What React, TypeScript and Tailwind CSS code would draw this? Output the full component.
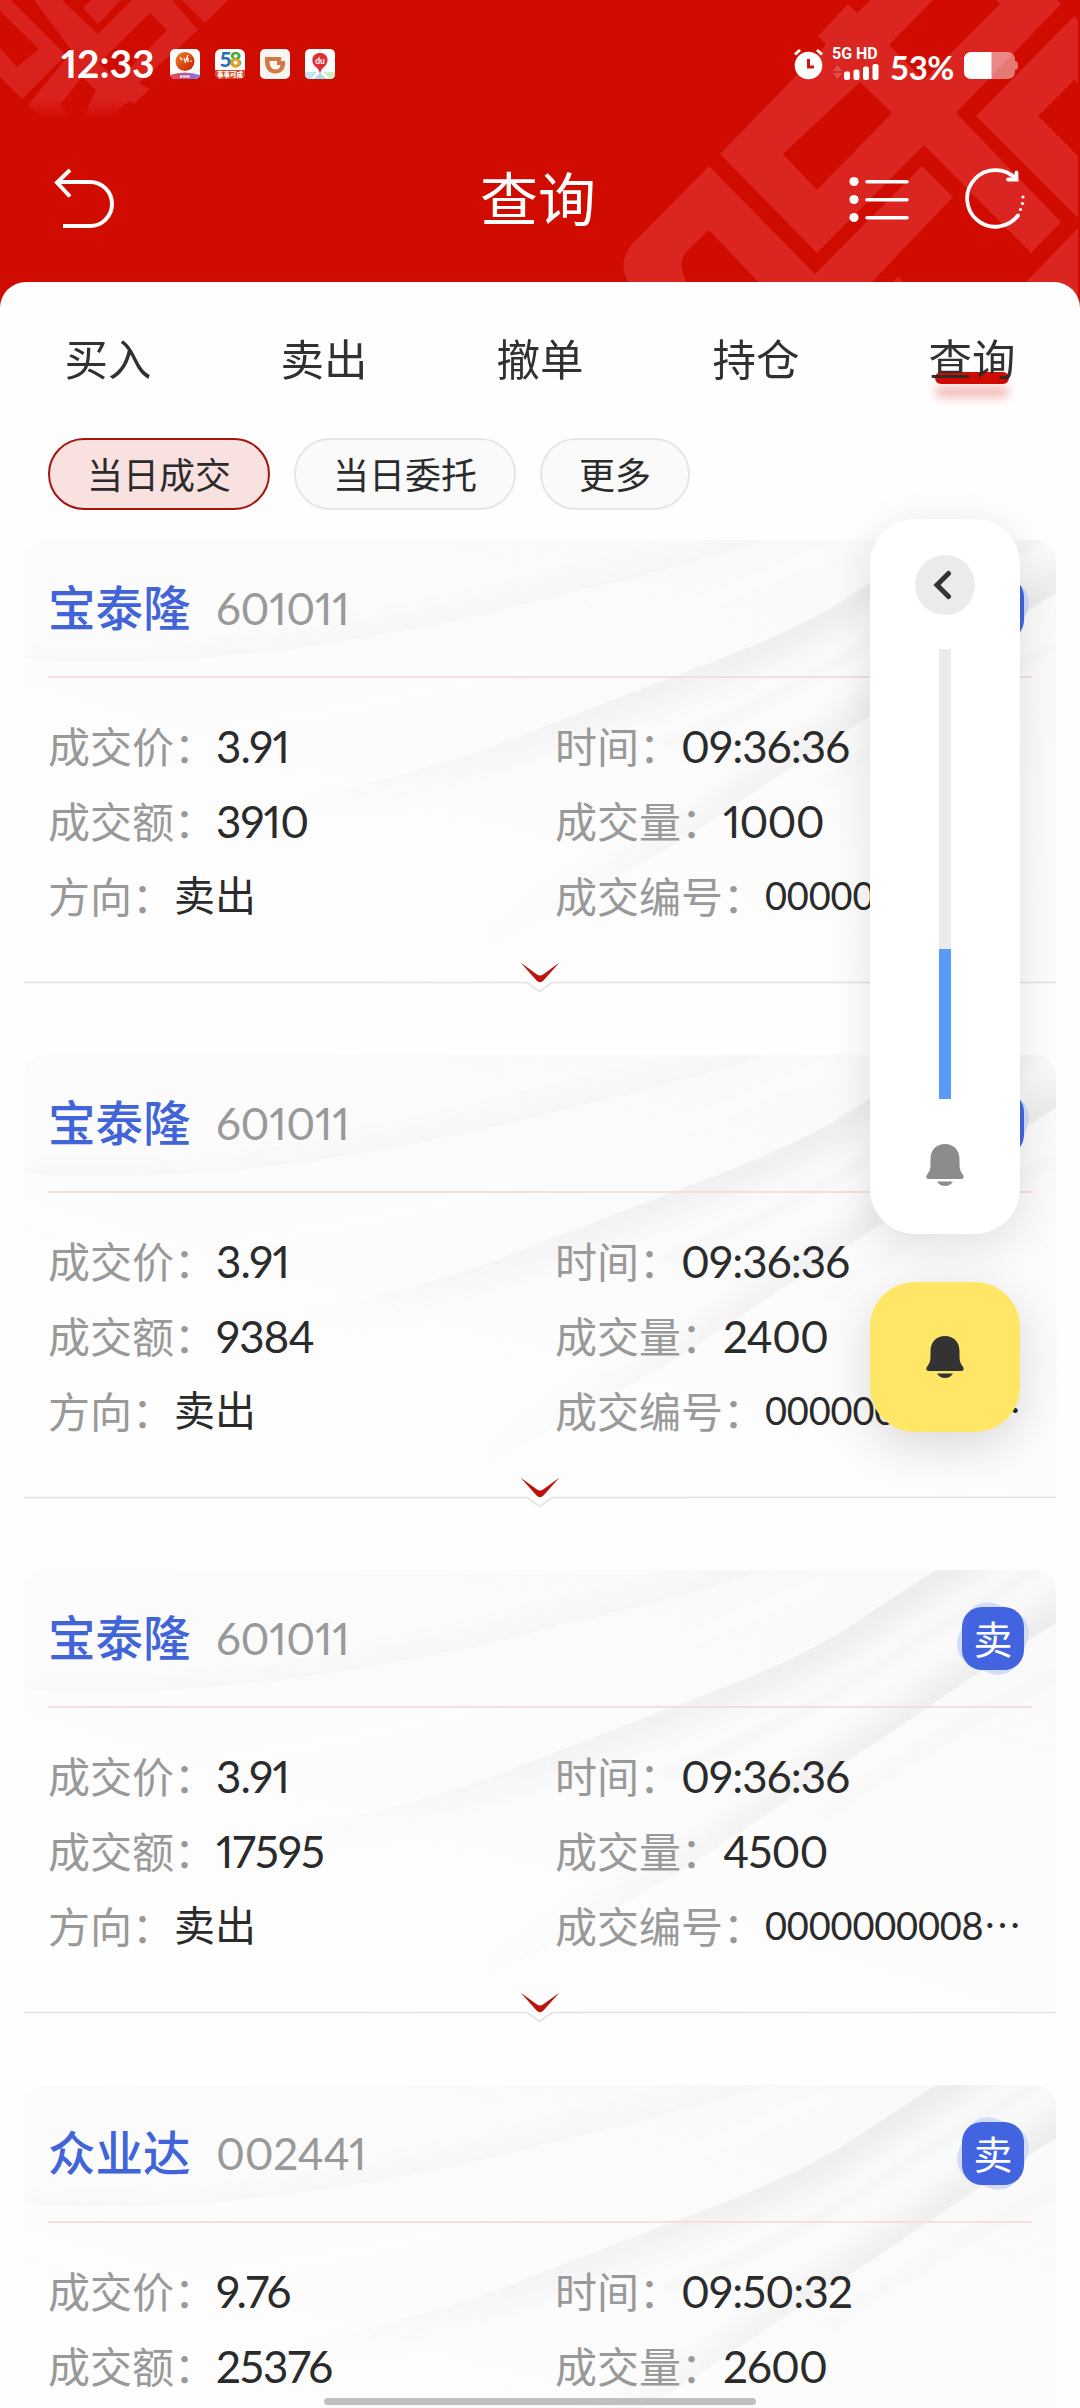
const tabs = ["买入", "卖出", "撤单", "持仓", "查询"];

const filters = ["当日成交", "当日委托", "更多"];

const deals = [
  { name: "宝泰隆", code: "601011", price: "3.91", time: "09:36:36", amount: "3910", volume: "1000" },
  { name: "宝泰隆", code: "601011", price: "3.91", time: "09:36:36", amount: "9384", volume: "2400" },
  { name: "宝泰隆", code: "601011", price: "3.91", time: "09:36:36", amount: "17595", volume: "4500" },
  { name: "众业达", code: "002441", price: "9.76", time: "09:50:32", amount: "25376", volume: "2600" },
];

function HeaderPattern() {
  return (
    <svg className="absolute inset-0" width="1080" height="306" viewBox="0 0 1080 306">
      <defs>
        <linearGradient id="fade" x1="0" y1="0" x2="0" y2="1">
          <stop offset="0.82" stopColor="#fff" />
          <stop offset="1" stopColor="#000" />
        </linearGradient>
        <mask id="fadeMask" maskUnits="userSpaceOnUse" x="0" y="0" width="240" height="120">
          <rect width="240" height="120" fill="url(#fade)" />
        </mask>
      </defs>
      {/* Left corner knot */}
      <g fill="#d9221e" mask="url(#fadeMask)">
        <path d="M0 0H11L66 55L22 99L0 77V48L17 67L39 49L0 11Z" />
        <path fillRule="evenodd" d="M34 0H62L98 34L132 0H172L198 30L139 83L150 89L134 104L129 101L108 120H44L28 105L72 51ZM150 13L167 30L118 80L99 63ZM82 77L96 90L82 120H74L60 105Z" />
        <path d="M83 8L91 0H121L98 24Z" />
        <path d="M182 0H228L205 23Z" />
      </g>
      {/* Right corner knot */}
      <g fill="#da2520">
        <path
          fillRule="evenodd"
          d="M848 4L857 13L871 0H1057L1061 4L956 113L1061 222L1031 253L924 145L817 253L720 154L826 45L818 36ZM933 0L889 45L924 80L1000 4L996 0ZM860 82L892 113L817 190L783 154Z"
        />
        <path d="M1074 16L1078 20V84L1074 80L1038 116L1078 156V218L976 116Z" />
        <path d="M709 166L815 274L922 166L953 197L870 284H760L709 230L686 252Q676 266 688 284H629Q616 262 633 243Z" />
        <path d="M898 277L905 284H891Z" />
        <path d="M1078 228L1024 284V306H1078Z" />
      </g>
    </svg>
  );
}

function AppIcons() {
  return (
    <div className="ml-[17px] flex gap-[15px]">
      <svg width="30" height="30" viewBox="0 0 30 30">
        <defs>
          <linearGradient id="ball" x1="0" y1="0" x2="1" y2="1">
            <stop offset="0" stopColor="#f08020" />
            <stop offset="1" stopColor="#c81e0c" />
          </linearGradient>
          <linearGradient id="strip">
            <stop offset="0" stopColor="#f04048" />
            <stop offset="1" stopColor="#7a7cf0" />
          </linearGradient>
        </defs>
        <rect width="30" height="30" rx="5" fill="#fff" />
        <path d="M0 26Q15 21 30 26V27Q28 30 25 30H5Q1 30 0 26Z" fill="url(#strip)" />
        <circle cx="15" cy="12.5" r="9.5" fill="url(#ball)" />
        <path d="M10 8.500L12 11M14 9L15.500 13M18 6L15 14M18 9V13M21 11.500V13" stroke="#fff" strokeWidth="1.300" />
        <path d="M10 27.500H20" stroke="#fff" strokeWidth="2" strokeDasharray="2.500 .6" />
      </svg>
      <svg width="30" height="30" viewBox="0 0 30 30" fontWeight="900">
        <rect width="30" height="30" rx="6" fill="#fff" />
        <path d="M0 21H30V24Q30 30 24 30H6Q0 30 0 24Z" fill="#dc4528" />
        <g fontFamily="Lato" fontSize="21">
          <text x="4.500" y="18" fill="#2470b8">5</text>
          <text x="14.500" y="18" fill="#45a835">8</text>
        </g>
        <circle cx="20.500" cy="14" r="3.500" fill="none" stroke="#f0a020" strokeWidth="2.600" />
        <text x="15" y="28" textAnchor="middle" fontFamily="Noto Sans CJK SC" fontSize="6.500" fill="#fff">事事可成</text>
      </svg>
      <svg width="30" height="30" viewBox="0 0 30 30">
        <rect width="30" height="30" rx="5" fill="#f8f5f3" />
        <path fillRule="evenodd" d="M5 8H21V12H25Q26 24 15 24.500Q4 24 5 8ZM9.500 12H17V16H20.500Q20 20.500 15 20.500Q9.500 20 9.500 12Z" fill="#d17843" />
      </svg>
      <svg width="30" height="30" viewBox="0 0 30 30">
        <rect width="30" height="30" rx="5" fill="#fff" />
        <path d="M0 23H12L6 30H4Q0 29 0 26Z" fill="#bfe4f2" />
        <path d="M15 24L22 30H9Z" fill="#a8dcf0" />
        <path d="M18 23H30V26Q29 30 26 30H25Z" fill="#d3ecc0" />
        <path d="M15 4C6 4 5.500 14 11 18Q14 20 15 25Q16 20 19 18C24.500 14 24 4 15 4Z" fill="#dc2f36" />
        <text x="15" y="14.500" textAnchor="middle" fontSize="8.500" fontWeight="700" fontFamily="Lato" fill="#fff">du</text>
      </svg>
    </div>
  );
}

function StatusBar() {
  return (
    <div className="relative flex h-[128px] items-start pt-[49px] pl-[61px] text-white">
      <span className="mt-[-8px] w-[92px] font-['Lato'] text-[39px] leading-[44px] font-bold whitespace-nowrap [font-variant-numeric:proportional-nums]">12:33</span>
      <AppIcons />
      <svg className="mt-[-1px] ml-[458px]" width="30" height="32" viewBox="0 0 30 32">
        <circle cx="15.500" cy="17.500" r="13.800" fill="#fff" />
        <path d="M2 6.500L7 2M29 6.500L24 2" stroke="#fff" strokeWidth="3" />
        <path d="M15.500 11V19H21" stroke="#d3130d" strokeWidth="3" fill="none" />
      </svg>
      <div className="mt-[-3px] ml-[9px] flex w-[48px] flex-col">
        <span className="font-['Roboto'] text-[16px] leading-[15px] font-bold whitespace-nowrap">5G HD</span>
        <svg className="mt-[2px]" width="48" height="18" viewBox="0 0 48 18">
          <path d="M5.500 2L10 8H1ZM5.500 16L10 10H1Z" fill="#fff" opacity="0.200" />
          <g fill="#fff">
            <rect x="12" y="8.500" width="6" height="8.500" rx="2" />
            <rect x="21.500" y="6.500" width="6" height="10.500" rx="2" />
            <rect x="31" y="3.500" width="6" height="13.500" rx="2" />
            <rect x="40.500" y="1" width="6" height="16" rx="2" />
          </g>
        </svg>
      </div>
      <span className="mt-[-2px] ml-[10px] w-[67px] font-['Lato'] text-[33px] leading-[40px] font-bold tracking-[-0.5px] whitespace-nowrap">53%</span>
      <svg className="mt-[3px] ml-[7px]" width="54" height="27" viewBox="0 0 54 27">
        <path d="M8 0H43Q51 0 51 8V9Q54 9 54 13.500Q54 18 51 18V19Q51 27 43 27H8Q0 27 0 19V8Q0 0 8 0Z" fill="#fff" opacity="0.450" />
        <path d="M8 0H27.500V27H8Q0 27 0 19V8Q0 0 8 0Z" fill="#fff" />
      </svg>
    </div>
  );
}

function TitleBar() {
  return (
    <div className="relative flex h-[154px] items-start justify-between pt-[38px] pr-[53px] pl-[52px] text-white">
      <svg width="64" height="64" viewBox="0 0 64 64" fill="none" stroke="#fff" strokeWidth="4">
        <path d="M18 4L5 16.500L18 30.500" />
        <path d="M5 16H38A22 22 0 0 1 38 60H11" />
      </svg>
      <h1 className="mt-[-3px] ml-[112px] text-[58px] leading-[66px] font-normal">查询</h1>
      <div className="flex gap-[53px]">
        <svg width="62" height="64" viewBox="0 0 62 64" fill="#fff">
          <circle cx="6" cy="15.500" r="4.600" />
          <circle cx="6" cy="33.500" r="4.600" />
          <circle cx="6" cy="51.500" r="4.600" />
          <path d="M19 15.700H59M19 33.700H59M19 51.700H59" stroke="#fff" strokeWidth="3.600" strokeLinecap="round" />
        </svg>
        <svg width="64" height="64" viewBox="0 0 64 64" fill="none" stroke="#fff" strokeWidth="3.800">
          <path d="M55 49.500A28.300 28.300 0 1 1 53 13" strokeLinecap="round" />
          <path d="M53.500 6.500V13.500H45" strokeLinecap="round" />
          <g fill="#fff" stroke="none">
            <circle cx="60" cy="31" r="1.600" />
            <circle cx="59.500" cy="37.500" r="1.600" />
            <circle cx="57.500" cy="43.500" r="1.600" />
          </g>
        </svg>
      </div>
    </div>
  );
}

// Soft silk folds behind each card, each one a blurred stroke cut along its edge
function CardSilk({ id }: { id: string }) {
  return (
    <svg className="absolute inset-0" width="1032" height="442" viewBox="0 0 1032 442" fill="none">
      <defs>
        <linearGradient id={`${id}-g`}>
          <stop offset="0.100" stopColor="#000" stopOpacity="0" />
          <stop offset="0.500" stopColor="#000" stopOpacity="0.035" />
          <stop offset="1" stopColor="#000" stopOpacity="0.055" />
        </linearGradient>
        <linearGradient id={`${id}-bg`} x1="1" y1="0" x2="0.300" y2="1">
          <stop offset="0" stopColor="#f9f9f9" />
          <stop offset="1" stopColor="#fefefe" />
        </linearGradient>
        <filter id={`${id}-b`} x="-20%" y="-50%" width="140%" height="200%">
          <feGaussianBlur stdDeviation="12" />
        </filter>
        <filter id={`${id}-s`} x="-20%" y="-50%" width="140%" height="200%">
          <feGaussianBlur stdDeviation="4" />
        </filter>
        <clipPath id={`${id}-a`}>
          <path d="M912 0L809 67Q750 100 667 130L516 188Q380 245 190 270L0 280V442H1032V0Z" />
        </clipPath>
        <clipPath id={`${id}-c`}>
          <path d="M1032 53Q960 98 860 167L774 223L654 303L516 380L400 442H0V0H1032Z" />
        </clipPath>
        <clipPath id={`${id}-d`}>
          <path d="M743 0Q640 32 536 55Q330 110 155 119Q70 124 0 119V0Z" />
        </clipPath>
      </defs>
      <rect width="1032" height="442" fill={`url(#${id}-bg)`} />
      <g clipPath={`url(#${id}-a)`}>
        <path d="M960 -30L809 67Q750 100 667 130L516 188Q380 245 190 270" stroke={`url(#${id}-g)`} strokeWidth="44" filter={`url(#${id}-b)`} />
      </g>
      <g clipPath={`url(#${id}-c)`}>
        <path d="M1060 35Q960 98 860 167L774 223L654 303L516 380L380 450" stroke={`url(#${id}-g)`} strokeWidth="40" filter={`url(#${id}-b)`} />
      </g>
      <g clipPath={`url(#${id}-d)`}>
        <path d="M743 0Q640 32 536 55Q330 110 155 119Q70 124 0 119" stroke="#000" strokeOpacity="0.018" strokeWidth="26" filter={`url(#${id}-b)`} />
      </g>
      <g filter={`url(#${id}-s)`}>
        <path d="M1012 0L895 70Q760 160 640 205" stroke="#000" strokeOpacity="0.022" strokeWidth="8" />
        <path d="M800 12Q600 100 500 128T200 190" stroke="#fff" strokeOpacity="0.500" strokeWidth="8" />
        <path d="M1032 105Q900 170 800 245" stroke="#000" strokeOpacity="0.012" strokeWidth="12" />
      </g>
    </svg>
  );
}

function Field({ label, value, small = false }: { label: string; value: string; small?: boolean }) {
  return (
    <div className="flex h-[75px] items-center text-[42px] whitespace-nowrap">
      <span className="mt-[-3px] text-[#999]">{label}：</span>
      <span
        className={
          small
            ? "font-['Lato','Noto_Sans_CJK_SC',sans-serif] text-[38px] tracking-[-0.2px] text-[#2b2b2b]"
            : "font-['Lato','Noto_Sans_CJK_SC',sans-serif] text-[44px] tracking-[-0.9px] text-[#2b2b2b] [font-variant-numeric:proportional-nums]"
        }
      >
        {value}
      </span>
    </div>
  );
}

function DealCard({ deal, id }: { deal: (typeof deals)[number]; id: string }) {
  return (
    <div className="relative h-[443px] w-[1032px] shrink-0">
      <div className="absolute inset-0 overflow-hidden rounded-t-[20px]">
        <CardSilk id={id} />
      </div>
      <div className="relative px-6">
        <div className="flex h-[136px] items-center">
          <span className="mt-[-4px] w-[168px] text-[47.5px] font-medium text-[#4264d9]">{deal.name}</span>
          <span className="font-['Lato'] text-[44px] tracking-[-0.3px] text-[#999] [font-variant-numeric:proportional-nums]">{deal.code}</span>
          <div className="relative mr-[8px] ml-auto h-[63px] w-[62px]">
            <span className="absolute inset-0 scale-[1.06] rotate-[22deg] rounded-[22px] bg-[#d3dbf6]" />
            <span className="absolute inset-0 flex items-center justify-center rounded-[20px] bg-[#4264e0] pb-[2px] text-[39px] text-white">卖</span>
          </div>
        </div>
        <div className="h-[2px] bg-[#f3dfdd]" />
        <div className="mt-[30px] grid grid-cols-[507px_1fr]">
          <Field label="成交价" value={deal.price} />
          <Field label="时间" value={deal.time} />
          <Field label="成交额" value={deal.amount} />
          <Field label="成交量" value={deal.volume} />
          <div className="flex h-[75px] items-center text-[42px] whitespace-nowrap">
            <span className="mt-[-3px] text-[#999]">方向：</span>
            <span className="mt-[-3px] text-[41px] text-[#2b2b2b]">卖出</span>
          </div>
          <Field label="成交编号" value="0000000008⋯" small />
        </div>
      </div>
      <svg className="absolute top-[420px] left-0" width="1032" height="34" viewBox="0 0 1032 34" fill="none">
        <path d="M503 22.500L515.500 31.500L528 22.500V19H503Z" fill="#fefefe" />
        <path d="M0 22.500H503L515.500 31.500L528 22.500H1032" stroke="#e2e2e2" strokeWidth="1.600" />
        <path d="M496.500 2.500L513 14.500Q516 16.500 519 14.500L535.500 2.500L519.500 20.500Q516 24 512.500 20.500Z" fill="#bd150d" />
      </svg>
    </div>
  );
}

function Bell({ color }: { color: string }) {
  return (
    <svg width="38" height="42" viewBox="0 0 38 42" fill={color}>
      <path d="M19 0C10 0 4.500 6.500 4.500 15V20C4.500 26 3 28 .8 31Q-1 35 3 35H35Q39 35 37.200 31C35 28 33.500 26 33.500 20V15C33.500 6.500 28 0 19 0Z" />
      <path d="M11 37.500H27Q24 42 19 42T11 37.500Z" />
    </svg>
  );
}

function VolumePanel() {
  return (
    <div className="absolute top-[519px] left-[870px] flex w-[150px] flex-col gap-[48px]">
      <div className="flex h-[715px] flex-col items-center rounded-[45px] bg-white pt-[36px] shadow-[0_10px_44px_rgba(0,0,0,0.11)]">
        <div className="flex h-[60px] w-[60px] items-center justify-center rounded-full bg-[#ebebeb]">
          <svg className="mr-[4px]" width="20" height="30" viewBox="0 0 20 30" fill="none" stroke="#333" strokeWidth="5" strokeLinecap="round">
            <path d="M15.500 3.500L4 15L15.500 26.500" />
          </svg>
        </div>
        <div className="mt-[34px] flex h-[450px] w-[12px] items-end bg-[#ebebeb]">
          <div className="h-[150px] w-full bg-[#5a9cf5]" />
        </div>
        <div className="mt-[45px]">
          <Bell color="#8c8c8c" />
        </div>
      </div>
      <div className="flex h-[150px] items-center justify-center rounded-[45px] bg-[#ffe667] shadow-[0_14px_48px_rgba(0,0,0,0.14)]">
        <Bell color="#333" />
      </div>
    </div>
  );
}

export default function App() {
  return (
    <div className="relative h-[2408px] w-[1080px] overflow-hidden bg-white font-['Noto_Sans_CJK_SC',sans-serif]">
      <header className="relative h-[282px] bg-[#d00b00]">
        <HeaderPattern />
        <StatusBar />
        <TitleBar />
      </header>
      <div className="bg-[#d00b00]">
        <main className="relative rounded-t-[26px] bg-[#fefefe]">
          <nav className="grid h-[156px] grid-cols-5 text-center text-[43.5px] leading-[152px] text-[#2b2b2b]">
            {tabs.map((tab) => (
              <div key={tab} className="relative">
                {tab === "查询" && (
                  <span className="absolute top-[90px] left-[71px] h-[12px] w-[74px] rounded-full bg-[#d00b00] shadow-[0_14px_10px_rgba(220,40,30,0.300)]" />
                )}
                <span className="relative opacity-[0.970]">{tab}</span>
              </div>
            ))}
          </nav>
          <div className="flex gap-6 px-12">
            {filters.map((filter, i) => (
              <div
                key={filter}
                className={
                  i === 0
                    ? "flex h-[72px] items-center rounded-full border-2 border-[#a31510] bg-[#f9e1e0] px-[37px] pb-[3px] text-[36px] text-[#2b2b2b]"
                    : "flex h-[72px] items-center rounded-full border-2 border-[#e6e6e6] bg-[#fafafa] px-[37px] pb-[3px] text-[36px] text-[#2b2b2b]"
                }
              >
                {filter}
              </div>
            ))}
          </div>
          <div className="mt-[30px] flex flex-col gap-[72px] px-6">
            {deals.map((deal, i) => (
              <DealCard key={i} deal={deal} id={`silk${i}`} />
            ))}
          </div>
        </main>
      </div>
      <VolumePanel />
      <div className="absolute bottom-[3px] left-[324px] h-[7px] w-[432px] rounded-full bg-[#c0c0c0]" />
    </div>
  );
}
